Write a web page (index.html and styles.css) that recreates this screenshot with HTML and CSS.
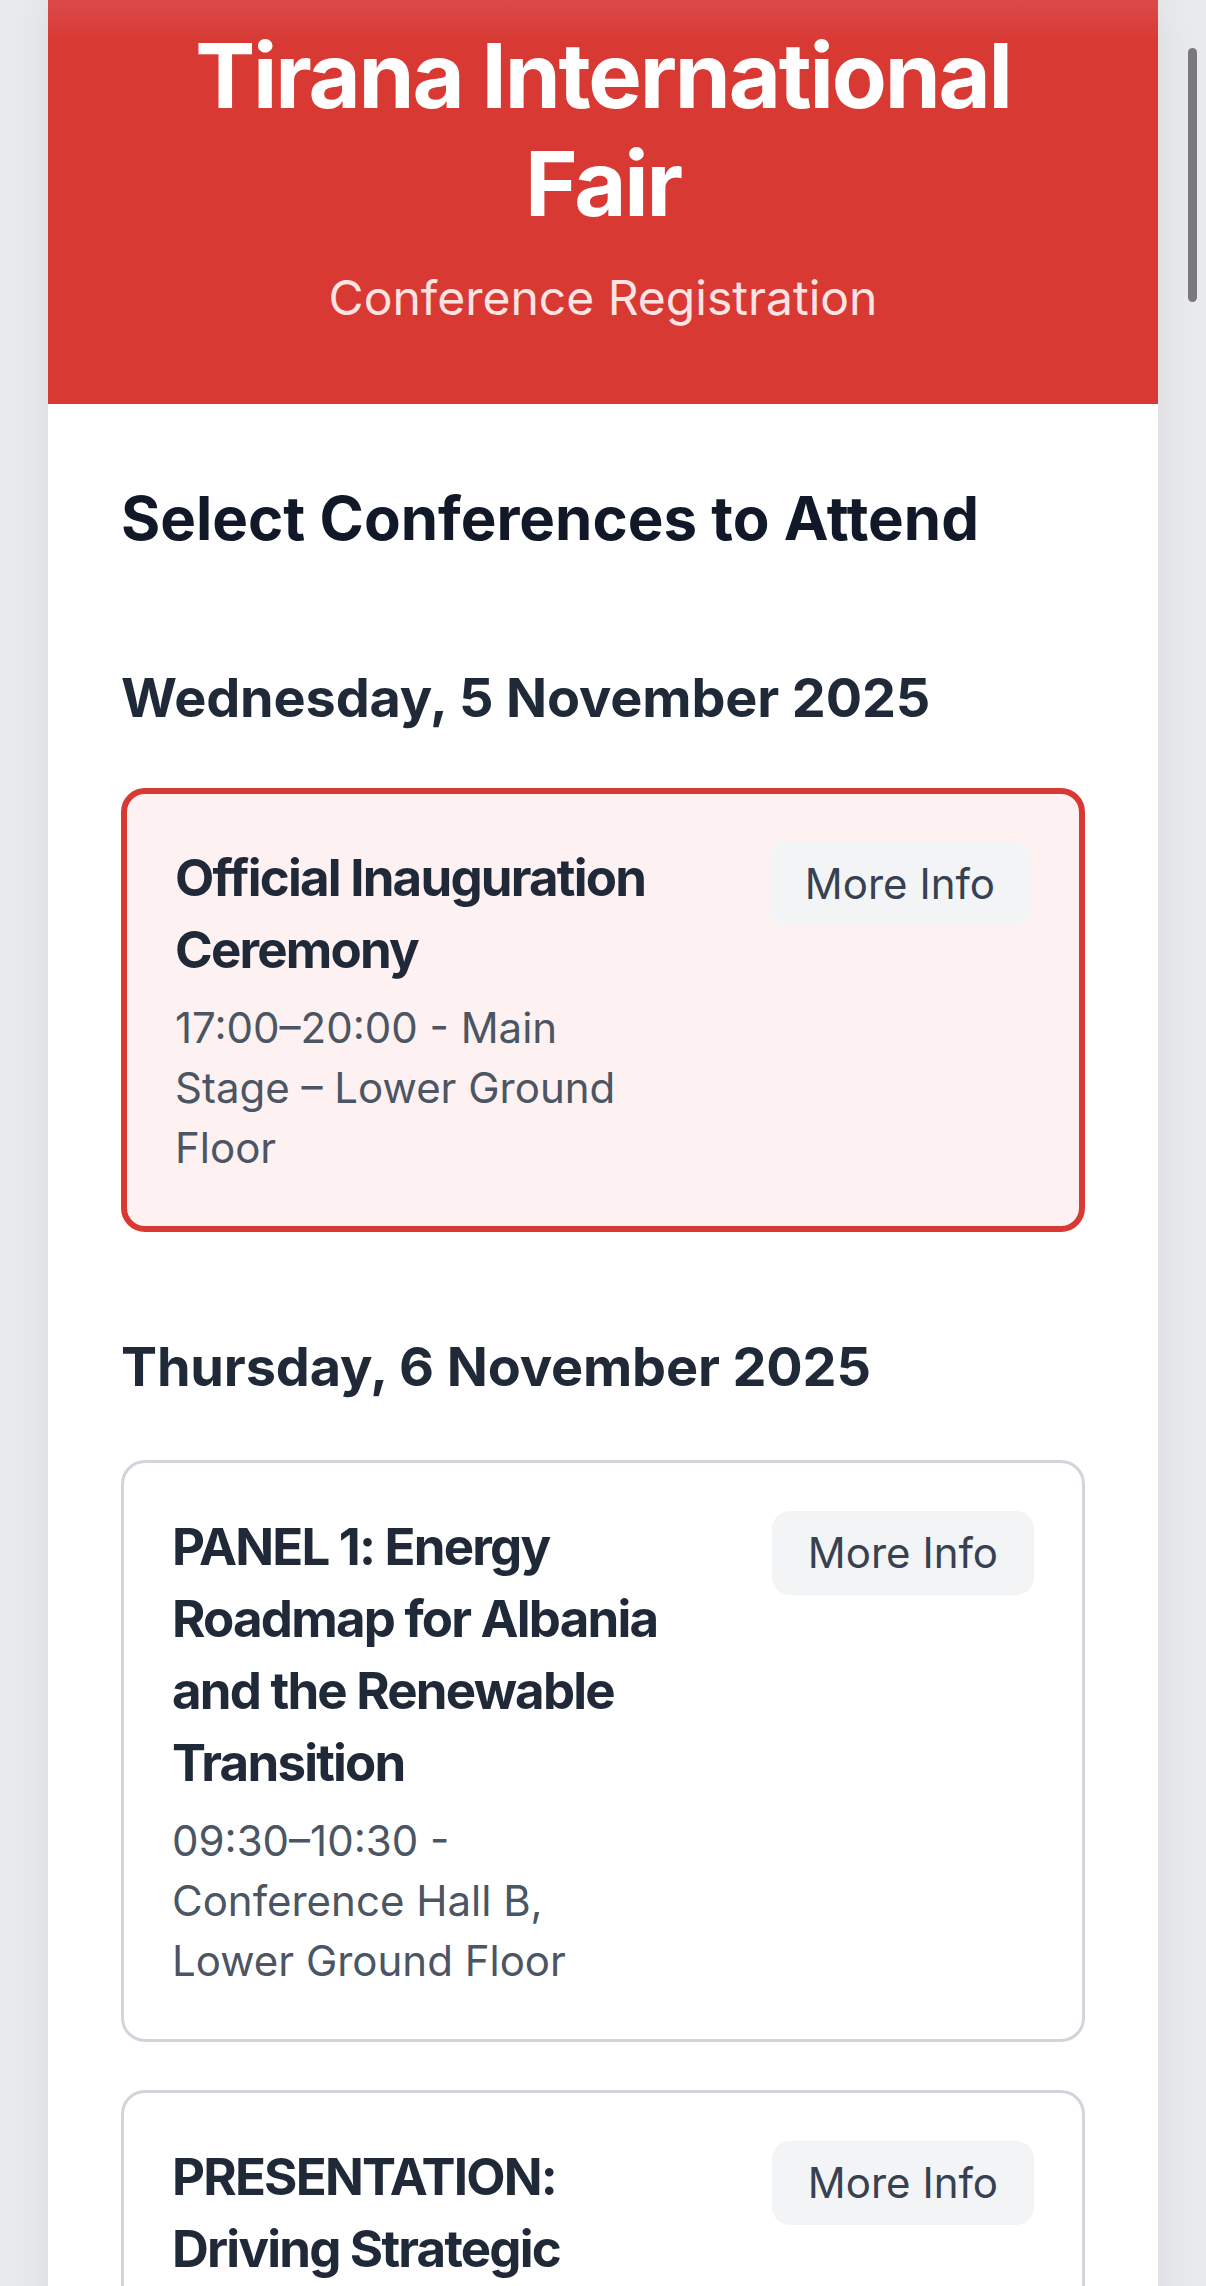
FILE: index.html
```html
<!DOCTYPE html>
<html lang="en">
<head>
<meta charset="utf-8">
<title>Tirana International Fair – Conference Registration</title>
<link rel="stylesheet" href="styles.css">
</head>
<body>
<div class="page">
  <header class="hero">
    <h1 class="hero-title">Tirana International Fair</h1>
    <p class="hero-sub">Conference Registration</p>
  </header>
  <main class="content">
    <h2 class="section-title">Select Conferences to Attend</h2>
    <section class="day">
      <h3 class="day-title">Wednesday, 5 November 2025</h3>
      <div class="card-list">
        <div class="card selected">
          <div class="card-info">
            <div class="card-title">Official Inauguration Ceremony</div>
            <div class="card-meta">17:00–20:00 - Main Stage – Lower Ground Floor</div>
          </div>
          <button class="more-btn" type="button">More Info</button>
        </div>
      </div>
    </section>
    <section class="day">
      <h3 class="day-title">Thursday, 6 November 2025</h3>
      <div class="card-list">
        <div class="card">
          <div class="card-info">
            <div class="card-title">PANEL 1: Energy Roadmap for Albania and the Renewable Transition</div>
            <div class="card-meta">09:30–10:30 - Conference Hall B, Lower Ground Floor</div>
          </div>
          <button class="more-btn" type="button">More Info</button>
        </div>
        <div class="card">
          <div class="card-info">
            <div class="card-title">PRESENTATION: Driving Strategic Investment in the Energy Sector</div>
            <div class="card-meta">10:30–11:00 - Conference Hall B, Lower Ground Floor</div>
          </div>
          <button class="more-btn" type="button">More Info</button>
        </div>
      </div>
    </section>
  </main>
</div>
<div class="scroll-thumb"></div>
</body>
</html>
```

FILE: styles.css
```css
* { box-sizing: border-box; }

html, body {
  margin: 0;
  padding: 0;
}

body {
  background: #e9eaed;
  font-family: Inter, "Noto Sans", "Liberation Sans", sans-serif;
  color: #1f2937;
}

.page {
  margin: 0 48px;
  background: #ffffff;
  box-shadow: 0 0 40px rgba(0, 0, 0, 0.07);
  min-height: 2400px;
}

.hero {
  background: linear-gradient(180deg, #db4a48 0px, #d83933 44px, #d83933 100%);
  text-align: center;
  padding: 22px 72px 70px;
  color: #ffffff;
}

.hero-title {
  margin: 0;
  font-size: 90px;
  line-height: 108px;
  font-weight: 700;
  letter-spacing: -2.2px;
}

.hero-sub {
  margin: 24px 0 0;
  font-size: 48px;
  line-height: 72px;
  font-weight: 400;
  color: #fde4e3;
}

.content {
  padding: 72px 73px;
}

.section-title {
  margin: 0 0 96px;
  font-size: 60px;
  line-height: 84px;
  font-weight: 700;
  color: #111827;
}

.day + .day {
  margin-top: 93px;
}

.day-title {
  margin: 0 0 48px;
  font-size: 54px;
  line-height: 84px;
  font-weight: 700;
  letter-spacing: -0.15px;
  color: #1f2937;
}

.day + .day .day-title {
  margin-bottom: 51px;
}

.card-list {
  display: flex;
  flex-direction: column;
  gap: 48px;
}

.card {
  display: flex;
  align-items: flex-start;
  gap: 48px;
  padding: 48px;
  border: 3px solid #d1d5db;
  border-radius: 24px;
  background: #ffffff;
}

.card.selected {
  border: 6px solid #d83933;
  background: #fdf1f1;
}

.card-info {
  flex: 1;
  min-width: 0;
  padding-right: 54px;
}

.card-title {
  font-size: 51px;
  line-height: 72px;
  font-weight: 700;
  letter-spacing: -1.8px;
  color: #1f2937;
}

.card-meta {
  margin-top: 12px;
  font-size: 42px;
  line-height: 60px;
  color: #4b5563;
}

.more-btn {
  flex: none;
  border: 0;
  border-radius: 18px;
  background: #f3f4f6;
  color: #374151;
  font-family: inherit;
  font-size: 42px;
  line-height: 60px;
  padding: 12px 36px;
}

.scroll-thumb {
  position: fixed;
  top: 48px;
  right: 9px;
  width: 9px;
  height: 254px;
  border-radius: 5px;
  background: #7a7a7a;
}
```
